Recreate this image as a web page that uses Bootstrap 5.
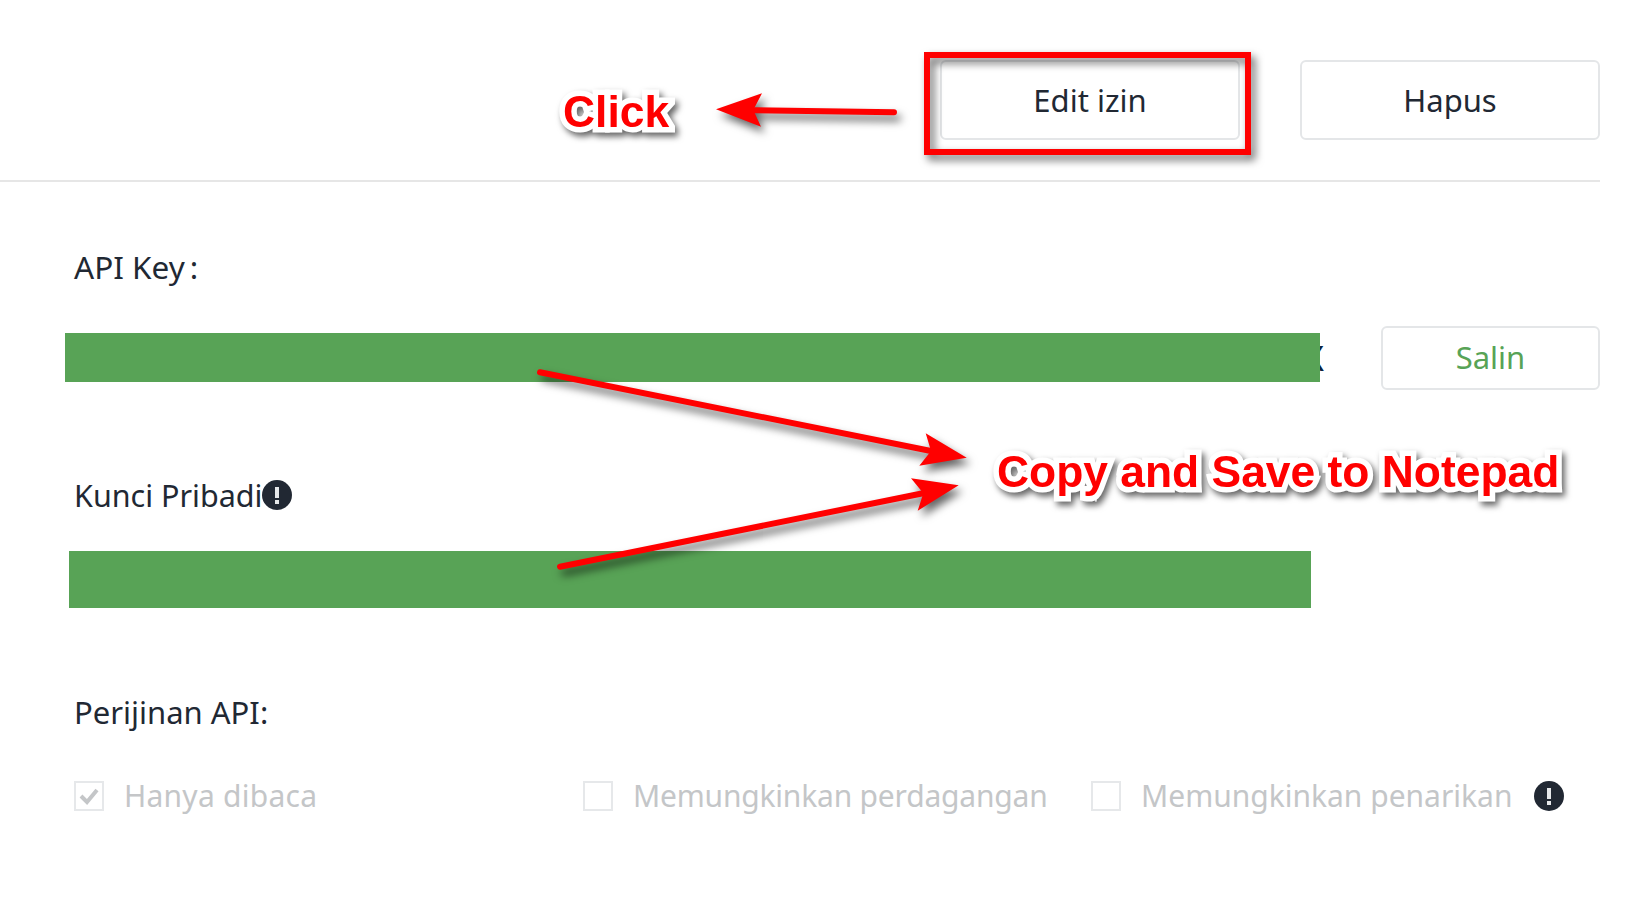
<!DOCTYPE html>
<html lang="id">
<head>
<meta charset="utf-8">
<title>API</title>
<link href="https://cdn.jsdelivr.net/npm/bootstrap@5.3.0/dist/css/bootstrap.min.css" rel="stylesheet">
<style>
html,body{height:100%}
body{background:#fff;color:#212833;font-family:"Noto Sans","Liberation Sans",sans-serif;overflow:hidden}
.stage{position:relative;width:1640px;height:897px}
.panel{width:1600px}
.topbar{height:181.5px;border-bottom:2px solid #e6e6e6;padding-top:60px;gap:60px}
.plain-btn{width:300px;height:80px;border:2.5px solid #e4e6e8;border-radius:6px;background:#fff;color:#212833;font-size:31px;line-height:1}
.label-line{font-size:31px;line-height:40px;margin-left:74px}
.label-a{padding-top:65px;font-size:31.5px}
.colon-mark{margin-left:5px}
.redact{background:#58a356;position:relative;z-index:1}
.redact-a{width:1255px;height:49px;margin-left:65px}
.key-row{margin-top:39px}
.copy-btn{width:219px;height:64px;border:2.5px solid #e4e6e8;border-radius:6px;background:#fff;color:#58a356;font-size:31px;line-height:1}
.key-tail{margin-left:-16px;color:#0c2340;font-size:34px;line-height:1}
.label-b{margin-top:85px;font-size:30.5px}
.redact-b{width:1242px;height:57px;margin-left:69px;margin-top:36px}
.label-c{margin-top:84px}
.perm-row{margin-top:49px;padding-left:74px;height:30px}
.tick{width:30px;height:30px;border:2.5px solid #e6e8ea;background:#fff;flex:none}
.perm-text{color:#c4c6c8;font-size:30px;line-height:30px;margin-left:20px;white-space:nowrap}
.perm-a{width:509px}
.perm-b{width:508px}
.wide-a{letter-spacing:.25px}
.narrow-b{letter-spacing:-.2px}
.info-dot{width:30px;height:30px;flex:none;display:block}
.after-text{margin-left:22px}
.overlay{position:absolute;inset:0;width:1640px;height:897px;pointer-events:none;overflow:visible;z-index:2;filter:drop-shadow(4px 6px 4px rgba(0,0,0,.6))}
.red-frame{position:absolute;z-index:2;left:924px;top:52px;width:327px;height:103px;border:6px solid #f00;filter:drop-shadow(4px 5px 4px rgba(0,0,0,.6))}
.callout{position:absolute;z-index:3;font-family:"Liberation Sans",sans-serif;font-weight:700;color:#f00;-webkit-text-stroke:11px #fff;paint-order:stroke fill;filter:drop-shadow(3px 4px 3px rgba(0,0,0,.6));white-space:nowrap;line-height:1}
.callout-a{left:563px;top:90px;font-size:44.4px}
.callout-b{left:997px;top:450px;font-size:44.4px}
</style>
</head>
<body>
<div class="stage">
  <div class="panel">
    <div class="topbar d-flex justify-content-end align-items-start">
      <button type="button" class="btn plain-btn">Edit izin</button>
      <button type="button" class="btn plain-btn">Hapus</button>
    </div>
    <div class="label-line label-a">API Key<span class="colon-mark">:</span></div>
    <div class="key-row d-flex align-items-center">
      <div class="redact redact-a"></div>
      <div class="key-tail">X</div>
      <button type="button" class="btn copy-btn ms-auto">Salin</button>
    </div>
    <div class="label-line label-b d-flex align-items-center">Kunci Pribadi
      <svg class="info-dot" viewBox="0 0 30 30"><circle cx="15" cy="15" r="15" fill="#212833"/><rect x="13" y="7" width="4" height="11" fill="#e6e8ea"/><rect x="13" y="20" width="4" height="4" fill="#e6e8ea"/></svg>
    </div>
    <div class="redact redact-b"></div>
    <div class="label-line label-c">Perijinan API:</div>
    <div class="perm-row d-flex align-items-center">
      <div class="perm-a d-flex align-items-center">
        <span class="tick d-flex align-items-center justify-content-center">
          <svg width="20" height="18" viewBox="0 0 20 18"><path d="M2 9l6 6L18 3" fill="none" stroke="#c4c6c8" stroke-width="4"/></svg>
        </span>
        <span class="perm-text wide-a">Hanya dibaca</span>
      </div>
      <div class="perm-b d-flex align-items-center">
        <span class="tick"></span>
        <span class="perm-text narrow-b">Memungkinkan perdagangan</span>
      </div>
      <div class="d-flex align-items-center flex-grow-1">
        <span class="tick"></span>
        <span class="perm-text">Memungkinkan penarikan</span>
        <svg class="info-dot after-text" viewBox="0 0 30 30"><circle cx="15" cy="15" r="15" fill="#212833"/><rect x="13" y="7" width="4" height="11" fill="#e6e8ea"/><rect x="13" y="20" width="4" height="4" fill="#e6e8ea"/></svg>
      </div>
    </div>
  </div>
  <div class="red-frame"></div>
  <svg class="overlay" viewBox="0 0 1640 897">
    <g stroke="#f00" stroke-width="6" stroke-linecap="round">
      <line x1="894" y1="112.3" x2="755" y2="110.2"/>
      <line x1="540" y1="372.3" x2="931" y2="451"/>
      <line x1="560" y1="566.7" x2="923" y2="493.3"/>
    </g>
    <g fill="#f00">
      <path d="M716 109.3L762 93.3L753.3 110L761 126.7Z"/>
      <path d="M966.7 457.7L925.7 433.3L931 451L919.3 465.7Z"/>
      <path d="M958.7 485.3L911 478.3L923.3 493.3L917.7 510.7Z"/>
    </g>
  </svg>
  <div class="callout callout-a">Click</div>
  <div class="callout callout-b">Copy and Save to Notepad</div>
</div>
<script src="https://cdn.jsdelivr.net/npm/bootstrap@5.3.0/dist/js/bootstrap.bundle.min.js"></script>
</body>
</html>
